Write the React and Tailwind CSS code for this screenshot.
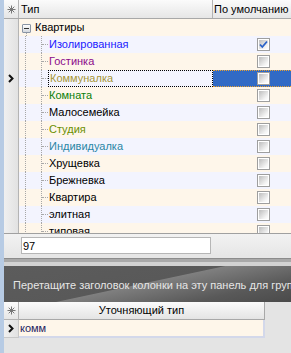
import React from "react";

const rows = [
  { text: "Изолированная", color: "text-[#1a1aff]", checked: true },
  { text: "Гостинка", color: "text-[#8b0a8b]" },
  { text: "Коммуналка", color: "text-[#a6963a]", selected: true },
  { text: "Комната", color: "text-[#0a800a]" },
  { text: "Малосемейка", color: "text-black" },
  { text: "Студия", color: "text-[#6a8f00]" },
  { text: "Индивидуалка", color: "text-[#2a86a6]" },
  { text: "Хрущевка", color: "text-black" },
  { text: "Брежневка", color: "text-black" },
  { text: "Квартира", color: "text-black" },
  { text: "элитная", color: "text-black" },
  { text: "типовая", color: "text-black" },
];

function Star() {
  return (
    <svg width="9" height="9" viewBox="0 0 9 9" stroke="#777" strokeWidth="1">
      <path d="M4.5 0.5v8M0.5 4.5h8M1.7 1.7l5.6 5.6M7.3 1.7l-5.6 5.6" />
    </svg>
  );
}

function Pointer() {
  return (
    <svg width="6" height="9" viewBox="0 0 6 9">
      <path d="M1 1l3.5 3.5L1 8" fill="none" stroke="#111" strokeWidth="2" />
    </svg>
  );
}

function Checkbox({ checked }) {
  return (
    <div className="w-[13px] h-[13px] border border-[#9e9e9e] bg-white p-[1px]">
      <div className="w-full h-full bg-[linear-gradient(135deg,#bdbdbd,#f4f4f4_75%,#ffffff)] flex items-center justify-center">
        {checked && (
          <svg width="9" height="9" viewBox="0 0 9 9">
            <path d="M1 4.5l2.3 2.5L8 1.5" fill="none" stroke="#2a62c8" strokeWidth="1.8" />
          </svg>
        )}
      </div>
    </div>
  );
}

function Indicator({ children, className = "" }) {
  return (
    <div className={`w-[15px] shrink-0 flex items-center justify-center bg-[linear-gradient(90deg,#f0f0f0,#e2e2e2)] border-r border-[#b4b4b4] ${className}`}>
      {children}
    </div>
  );
}

function ChildRow({ row, odd }) {
  const bg = odd ? "bg-[#f3f4fe]" : "bg-[#fef6ea]";
  return (
    <div className="flex h-[17px] shrink-0">
      <Indicator>{row.selected && <Pointer />}</Indicator>
      <div className={`w-[194px] shrink-0 flex ${bg}`}>
        <div className="w-[6px] shrink-0" />
        <div className="w-[16px] shrink-0 border-l border-dotted border-[#a8a8a8]" />
        <div className="w-[7px] shrink-0 border-l border-dotted border-[#a8a8a8] flex items-center">
          <div className="w-[6px] border-t border-dotted border-[#a8a8a8]" />
        </div>
        <div
          className={`flex-1 flex items-center pl-[1px] ${row.color} ${
            row.selected ? "border border-dotted border-black" : ""
          }`}
        >
          {row.text}
        </div>
      </div>
      <div
        className={`flex-1 flex items-center pl-[44px] ${
          row.selected ? "bg-[#316ac5] border-y border-dotted border-[#e8a030]" : bg
        }`}
      >
        <Checkbox checked={row.checked} />
      </div>
    </div>
  );
}

export default function App() {
  return (
    <div className="w-[291px] h-[353px] overflow-hidden flex bg-[#e4e4e4] border-l-[4px] border-[#b7cbe4] font-['Liberation_Sans',Arial,sans-serif] text-[11px] leading-none text-black">
      <div className="flex-1 flex flex-col min-w-0">
        {/* top grid */}
        <div className="h-[233px] flex flex-col overflow-hidden bg-white">
          <div className="flex h-[19px] shrink-0 border-b border-[#a8a8a8] bg-[linear-gradient(#fbfbfb,#e6e6e6)]">
            <div className="w-[15px] shrink-0 flex items-center justify-center border-r border-[#b4b4b4]">
              <Star />
            </div>
            <div className="w-[194px] shrink-0 flex items-center pl-[2px] border-r border-[#b4b4b4]">Тип</div>
            <div className="flex-1 flex items-center pl-[1px] whitespace-nowrap">По умолчанию</div>
          </div>
          <div className="flex h-[17px] shrink-0">
            <Indicator />
            <div className="w-[194px] shrink-0 flex bg-[#fef6ea]">
              <div className="w-[3px] shrink-0" />
              <div className="w-[9px] shrink-0 flex flex-col items-center">
                <div className="h-[5px]" />
                <div className="w-[9px] h-[9px] border border-[#8a95a5] rounded-[1px] bg-[linear-gradient(#fdfdfd,#d4d8de)] flex items-center justify-center">
                  <div className="w-[5px] h-[1px] bg-[#333]" />
                </div>
                <div className="flex-1 border-l border-dotted border-[#a8a8a8]" />
              </div>
              <div className="flex items-center pl-[4px]">Квартиры</div>
            </div>
            <div className="flex-1 bg-[#fef6ea]" />
          </div>
          {rows.map((row, i) => (
            <ChildRow key={row.text} row={row} odd={i % 2 === 0} />
          ))}
        </div>

        {/* footer */}
        <div className="h-[23px] shrink-0 flex items-start border-t border-[#a0a0a0] bg-[linear-gradient(#f2f2f2,#e6e6e6)] pt-[3px] pl-[17px]">
          <div className="w-[190px] h-[17px] border border-[#b6b6b6] bg-white flex items-end pl-[1px] pb-[1px]">97</div>
        </div>

        {/* splitter */}
        <div className="h-[10px] shrink-0 flex flex-col">
          <div className="h-[2px] bg-[#e6e6e6]" />
          <div className="h-[1px] bg-[#8c8c8c]" />
          <div className="h-[3px] bg-[#a9a9a9]" />
          <div className="h-[4px] bg-[#d2d2d2]" />
        </div>

        {/* group panel */}
        <div className="h-[36px] shrink-0 flex items-end pb-[11px] pl-[9px] text-[#e6e6e6] whitespace-nowrap overflow-hidden bg-[linear-gradient(168deg,#5c5c5c_0%,#595959_48%,#7f7f7f_49%,#595959_78%,#4a4a4a_100%)]">
          Перетащите заголовок колонки на эту панель для группировки
        </div>

        {/* lower grid */}
        <div className="flex h-[18px] shrink-0">
          <div className="w-[15px] shrink-0 flex items-center justify-center bg-[linear-gradient(#fbfbfb,#e6e6e6)] border-r border-b border-[#b4b4b4]">
            <Star />
          </div>
          <div className="w-[246px] shrink-0 flex items-center justify-center bg-[linear-gradient(#fbfbfb,#e4e4e4)] border-r border-b border-[#a8a8a8]">
            Уточняющий тип
          </div>
        </div>
        <div className="flex h-[18px] shrink-0">
          <Indicator className="border-b border-[#c8c8c8]">
            <Pointer />
          </Indicator>
          <div className="w-[246px] shrink-0 flex items-center pl-[1px] bg-[#fef6ea] border-r-2 border-b-2 border-[#d3d8ea] text-[#1c2260]">
            комм
          </div>
        </div>
        <div className="flex-1" />
      </div>
    </div>
  );
}
